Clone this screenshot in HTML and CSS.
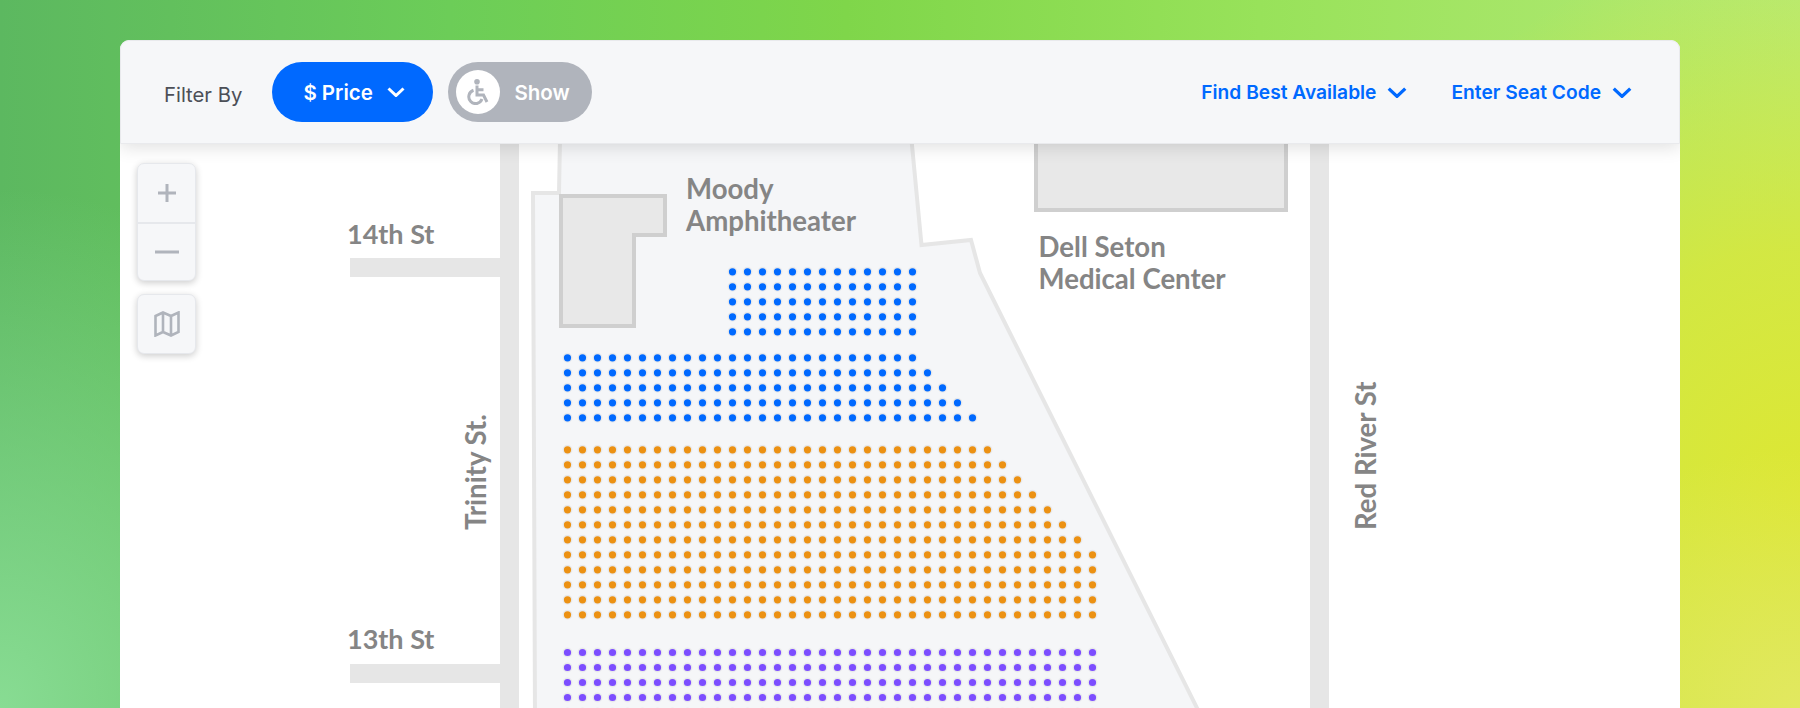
FILE: index.html
```html
<!DOCTYPE html>
<html lang="en">
<head>
<meta charset="utf-8">
<title>Seat map</title>
<link rel="stylesheet" href="styles.css">
</head>
<body>
<main class="panel">
  <header class="toolbar">
    <span class="filter-label">Filter By</span>
    <button class="chip chip-price">
      <span>$ Price</span>
      <svg class="chevron" viewBox="0 0 18 10"><path d="M1.500 1.500 9 8.500l7.500-7"/></svg>
    </button>
    <button class="chip chip-show">
      <span class="chip-knob">
        <svg class="wheelchair" viewBox="0 0 24 26"><circle class="wc-head" cx="11" cy="2.800" r="2.800"/><path d="M11 6.500v9.500h6.500l3.500 7M11 10.800h6.500M7.500 11.300a6.800 6.800 0 1 0 8.500 8.800"/></svg>
      </span>
      <span>Show</span>
    </button>
    <nav class="actions">
      <a class="action">Find Best Available<svg class="chevron chevron-lg" viewBox="0 0 18 10"><path d="M1.500 1.500 9 8.500l7.500-7"/></svg></a>
      <a class="action">Enter Seat Code<svg class="chevron chevron-lg" viewBox="0 0 18 10"><path d="M1.500 1.500 9 8.500l7.500-7"/></svg></a>
    </nav>
  </header>
  <section class="map">
    <svg class="map-canvas" viewBox="120 144 1560 564">
      <defs>
        <path id="rows-blue" d="M732.500 271.800H913M732.500 286.800H913M732.500 301.800H913M732.500 316.800H913M732.500 331.800H913M567.500 357.800H913M567.500 372.800H928M567.500 387.800H943M567.500 402.800H958M567.500 417.800H973"/>
        <path id="rows-orange" d="M567.500 449.800H988M567.500 464.800H1003M567.500 479.800H1018M567.500 494.800H1033M567.500 509.800H1048M567.500 524.800H1063M567.500 539.800H1078M567.500 554.800H1093M567.500 569.800H1093M567.500 584.800H1093M567.500 599.800H1093M567.500 614.800H1093"/>
        <path id="rows-purple" d="M567.500 652.500H1093M567.500 667.500H1093M567.500 682.500H1093M567.500 697.500H1093M567.500 712.500H1093"/>
      </defs>
      <rect class="road" x="500" y="144" width="19" height="564"/>
      <rect class="road" x="1310" y="144" width="19" height="564"/>
      <rect class="road" x="350" y="258" width="150" height="19"/>
      <rect class="road" x="350" y="664" width="150" height="19"/>
      <polygon class="venue" points="560,140 559,193 533,193 535,720 1203,720 980,273 971,240 921.500,245 911.500,140"/>
      <polygon class="building" points="561,196 665,196 665,235 634,235 634,326 561,326"/>
      <polygon class="building" points="1036,130 1286,130 1286,210 1036,210"/>
      <text class="label" x="686" y="198.500">Moody</text>
      <text class="label" x="686" y="231">Amphitheater</text>
      <text class="label" x="1038.500" y="256.500">Dell Seton</text>
      <text class="label" x="1038.500" y="289">Medical Center</text>
      <text class="label label-street" x="347" y="243.500">14th St</text>
      <text class="label label-street" x="347" y="649">13th St</text>
      <text class="label" transform="translate(486 530) rotate(-90)">Trinity St.</text>
      <text class="label" transform="translate(1376 530) rotate(-90)">Red River St</text>
      <g class="dot-halos">
        <use href="#rows-blue"/><use href="#rows-orange"/><use href="#rows-purple"/>
      </g>
      <g class="dots">
        <use class="dots-blue" href="#rows-blue"/>
        <use class="dots-orange" href="#rows-orange"/>
        <use class="dots-purple" href="#rows-purple"/>
      </g>
    </svg>
    <div class="map-controls">
      <div class="control-card">
        <button class="control"><svg class="control-icon" viewBox="0 0 24 24"><path d="M12 3v18M3 12h18"/></svg></button>
        <button class="control"><svg class="control-icon" viewBox="0 0 24 24"><path d="M0 12h24"/></svg></button>
      </div>
      <div class="control-card">
        <button class="control control-map"><svg class="control-icon" viewBox="0 0 26 26"><path d="M1.500 5 9 1.500l8 3.500 7.500-3.500v19.500L17 24.500 9 21l-7.500 3.500zM9 1.500V21M17 5v19.500"/></svg></button>
      </div>
    </div>
  </section>
</main>
</body>
</html>
```
FILE: styles.css
```css
* { box-sizing: border-box; }

html, body {
  margin: 0;
  height: 708px;
  overflow: hidden;
}

body {
  padding: 40px 120px 0;
  font-family: Inter, "Noto Sans", sans-serif;
  background:
    radial-gradient(ellipse 300px 260px at 1800px 708px, #e2e860 0%, rgba(226, 232, 96, 0) 100%),
    radial-gradient(ellipse 520px 560px at 1800px 500px, #dde733 0%, rgba(221, 231, 51, 0.75) 45%, rgba(221, 231, 51, 0) 100%),
    radial-gradient(ellipse 440px 520px at 0 708px, #88dc93 0%, rgba(136, 220, 147, 0) 100%),
    linear-gradient(90deg, #5cb860 0%, #6ccd58 25%, #7fd64a 47%, #98e25a 70%, #b5ea76 100%);
}

.panel {
  display: flex;
  flex-direction: column;
  height: 668px;
  background: #fff;
  border-radius: 9px 9px 0 0;
  overflow: hidden;
}

.toolbar {
  position: relative;
  z-index: 2;
  display: flex;
  flex: none;
  align-items: center;
  height: 104px;
  padding: 0 47px 0 43px;
  background: #f6f7f9;
  border: 1px solid #e9eaed;
  border-radius: 9px 9px 0 0;
  box-shadow: 0 3px 18px rgba(0, 0, 0, 0.13);
}

.filter-label {
  position: relative;
  top: 2px;
  margin-right: 30px;
  font-size: 20.300px;
  color: #4c4f57;
}

.chip {
  display: flex;
  align-items: center;
  height: 60px;
  border: 0;
  border-radius: 30px;
  color: #fff;
  font: 600 20.500px Inter, "Noto Sans", sans-serif;
}

.chip-price {
  gap: 14px;
  width: 161px;
  padding: 0 0 0 31px;
  background: #0069ff;
}

.chip-show {
  gap: 14px;
  width: 144px;
  margin-left: 15px;
  padding: 0 0 0 8px;
  background: #b0b4bc;
  font-size: 20.500px;
}

.chip-knob {
  display: flex;
  align-items: center;
  justify-content: center;
  width: 44px;
  height: 44px;
  border-radius: 50%;
  background: #fff;
}

.wheelchair {
  width: 24px;
  height: 26px;
  fill: none;
  stroke: #b0b4bc;
  stroke-width: 3;
}

.wc-head {
  fill: #b0b4bc;
  stroke: none;
}

.chevron {
  flex: none;
  width: 18px;
  height: 10px;
  fill: none;
  stroke: currentColor;
  stroke-width: 3;
}

.chevron-lg {
  width: 20px;
  height: 11px;
}

.actions {
  display: flex;
  gap: 44px;
  margin-left: auto;
}

.action {
  display: flex;
  align-items: center;
  gap: 11px;
  font-size: 19.200px;
  font-weight: 600;
  color: #0069ff;
}

.map {
  position: relative;
  flex: 1;
  min-height: 0;
}

.map-canvas {
  display: block;
  width: 1560px;
  height: 564px;
}

.road { fill: #e6e6e6; }

.venue {
  fill: #f5f6f8;
  stroke: #e6e6e6;
  stroke-width: 4;
}

.building {
  fill: #e8e8e8;
  stroke: #cfcfcf;
  stroke-width: 4;
}

.label {
  font-family: Lato, "Liberation Sans", sans-serif;
  font-size: 27.600px;
  font-weight: 700;
  fill: #858585;
}

.label-street { font-size: 27px; }

.dot-halos, .dots {
  fill: none;
  stroke-linecap: round;
  stroke-dasharray: 0 15;
}

.dot-halos {
  stroke: rgba(0, 0, 0, 0.05);
  stroke-width: 10;
}

.dots { stroke-width: 7.200; }
.dots-blue { stroke: #0069ff; }
.dots-orange { stroke: #ec9113; }
.dots-purple { stroke: #7c4dff; }

.map-controls {
  position: absolute;
  top: 19px;
  left: 17px;
  display: flex;
  flex-direction: column;
  gap: 13px;
}

.control-card {
  display: flex;
  flex-direction: column;
  width: 59px;
  background: #f6f7f9;
  border: 1px solid #e6e8ec;
  border-radius: 7px;
  box-shadow: 0 2px 7px rgba(0, 0, 0, 0.2);
  overflow: hidden;
}

.control {
  display: flex;
  align-items: center;
  justify-content: center;
  width: 100%;
  height: 58px;
  padding: 0;
  border: 0;
  background: none;
}

.control + .control { border-top: 2px solid #e6e8ec; }

.control-icon {
  width: 24px;
  height: 24px;
  fill: none;
  stroke: #b0b4bc;
  stroke-width: 3;
}

.control-map .control-icon {
  width: 26px;
  height: 26px;
  stroke-width: 2.600;
}
```
